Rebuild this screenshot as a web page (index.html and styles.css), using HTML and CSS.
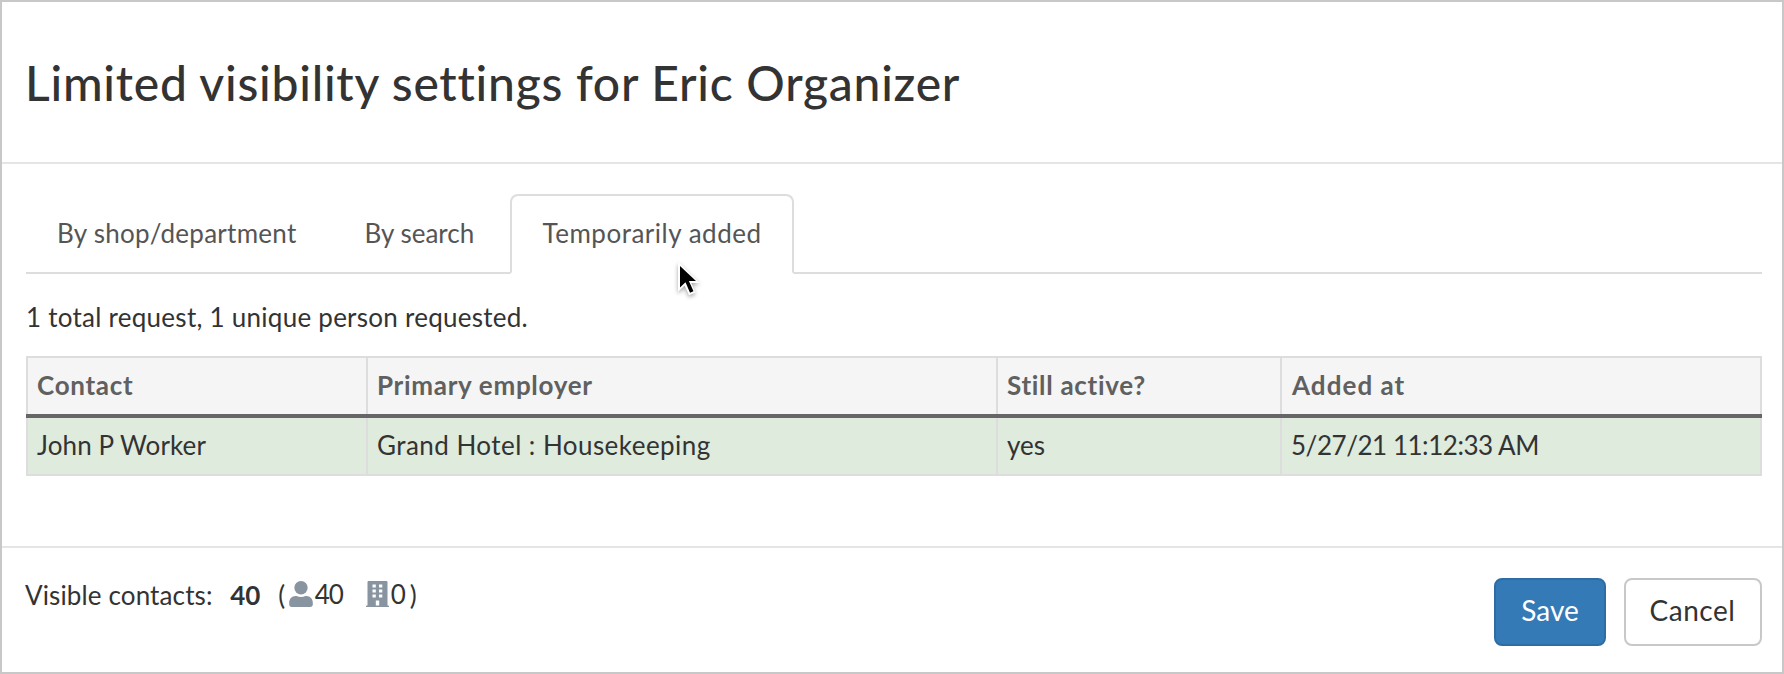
FILE: index.html
```
<!DOCTYPE html>
<html lang="en">
<head>
<meta charset="utf-8">
<title>Limited visibility settings</title>
<link rel="stylesheet" href="styles.css">
</head>
<body>
<main class="modal">
  <header class="modal-header">
    <h1 class="modal-title">Limited visibility settings for Eric Organizer</h1>
  </header>
  <section class="modal-body">
    <nav class="tabs">
      <a class="tab tab-shop">By shop/department</a>
      <a class="tab tab-search">By search</a>
      <a class="tab tab-temp active">Temporarily added</a>
    </nav>
    <p class="summary">1 total request, 1 unique person requested.</p>
    <table class="requests">
      <colgroup><col class="col-contact"><col class="col-employer"><col class="col-active"><col class="col-added"></colgroup>
      <thead>
        <tr><th>Contact</th><th>Primary employer</th><th>Still active?</th><th class="added-head">Added at</th></tr>
      </thead>
      <tbody>
        <tr><td class="name">John P Worker</td><td class="employer">Grand Hotel : Housekeeping</td><td>yes</td><td class="date">5/27/21 11:12:33 AM</td></tr>
      </tbody>
    </table>
  </section>
  <footer class="modal-footer">
    <div class="counts">
      <span class="counts-label">Visible contacts:</span>
      <strong class="total">40</strong>
      <span class="paren-open">(</span>
      <svg class="icon-person" viewBox="0 0 24 26"><circle cx="12" cy="6.7" r="6.7"/><path d="M6.600 15h1c1.300.6 2.800.9 4.400.9s3.100-.3 4.400-.9h1c3.600 0 6.400 2.900 6.400 6.500v2c0 1.400-1.100 2.500-2.500 2.500H2.700C1.300 26 .2 24.900.2 23.500v-2C.2 17.900 3 15 6.600 15z"/></svg>
      <span class="people">40</span>
      <svg class="icon-building" viewBox="0 0 23 26"><path fill-rule="evenodd" d="M1.500 1.200C1.500.5 2 0 2.700 0h17.600c.7 0 1.200.5 1.200 1.200v23.200h.6c.5 0 .9.4.9.900v.7H0v-.7c0-.5.4-.9.9-.9h.6zM6.500 3.400v3.200h3.300V3.400zM13 3.400v3.200h3.300V3.400zM6.500 8.400v3.200h3.300V8.400zM13 8.400v3.200h3.300V8.400zM6.500 13.400v3.200h3.300v-3.200zM13 13.400v3.200h3.300v-3.200zM9.800 19.600v4.800h3.400v-4.800z"/></svg>
      <span class="orgs">0</span>
      <span class="paren-close">)</span>
    </div>
    <div class="actions">
      <button class="btn btn-save">Save</button>
      <button class="btn btn-cancel">Cancel</button>
    </div>
  </footer>
</main>
<svg class="cursor" viewBox="0 0 32 42"><path d="M5 1.500v30.300l6.700-6.300 4.300 9.800 6.300-2.800-4.100-9.500h8.200z" fill="#fff"/><path d="M7 6v21.500l5.500-5.300 4.500 10.500 3.500-1.500-4.600-10.200H23z" fill="#000"/></svg>
</body>
</html>
```
FILE: styles.css
```
* { box-sizing: border-box; }
body {
  margin: 0;
  background: #fff;
  color: #333;
  font: 26px/36px Lato, "Open Sans", sans-serif;
}
.modal {
  display: flex;
  flex-direction: column;
  width: 1784px;
  height: 674px;
  border: 2px solid #c8c8c8;
}
.modal-header {
  height: 162px;
  padding-left: 23px;
  border-bottom: 2px solid #e5e5e5;
}
.modal-title {
  margin: 0;
  font-size: 48px;
  font-weight: 500;
  line-height: 161px;
  letter-spacing: .75px;
}
.modal-body {
  height: 382px;
  padding: 30px 20px 0 24px;
}
.tabs {
  display: flex;
  gap: 4px;
  height: 80px;
  border-bottom: 2px solid #ddd;
}
.tab {
  height: 80px;
  padding: 19px 0 0 28.500px;
  border: 2px solid transparent;
  color: #555;
  white-space: nowrap;
}
.tab-shop { width: 304px; padding-left: 29px; letter-spacing: .27px; }
.tab-search { width: 172px; }
.tab-temp { width: 284px; padding-left: 30.500px; letter-spacing: .51px; }
.tab.active {
  background: #fff;
  border-color: #ddd;
  border-bottom-color: #fff;
  border-radius: 8px 8px 0 0;
}
.summary { margin: 25px 0 21px; letter-spacing: .26px; }
.requests {
  width: 1736px;
  table-layout: fixed;
  border-collapse: collapse;
}
.col-contact { width: 340px; }
.col-employer { width: 630px; }
.col-active { width: 284px; }
.requests th,
.requests td {
  padding: 9px 10px 11px 9px;
  border: 2px solid #ddd;
  text-align: left;
}
.requests th {
  background: #f5f5f5;
  border-bottom: 4px solid #666;
  color: #606060;
  font-weight: 700;
  letter-spacing: .7px;
}
.requests .added-head { padding-left: 10px; letter-spacing: 1.05px; }
.requests td { background: #deebdd; }
.name { letter-spacing: .12px; }
.employer { letter-spacing: .45px; }
.date { letter-spacing: -.46px; }
.modal-footer {
  display: flex;
  justify-content: space-between;
  flex: 1;
  padding: 28px 20px 0 23px;
  border-top: 2px solid #e5e5e5;
}
.counts { display: flex; padding-top: 1px; }
.counts-label { letter-spacing: .13px; }
.total { width: 48px; margin-left: 17.500px; }
.paren-open { width: 10.500px; }
.icon-person { width: 24px; height: 26px; margin: 4px 2px 0 0; fill: #8894a0; }
.icon-building { width: 23px; height: 26px; margin: 4px 2px 0 0; fill: #8894a0; }
.people { width: 51px; letter-spacing: -1px; line-height: 34px; }
.orgs { width: 19px; line-height: 34px; }
.actions { display: flex; gap: 18px; padding-top: 2px; }
.btn {
  height: 68px;
  padding: 10px 0 14px;
  border: 2px solid #c8c8c8;
  border-radius: 8px;
  background: #fff;
  color: #333;
  font: 28px/40px Lato, "Open Sans", sans-serif;
}
.btn-save { width: 112px; border-color: #2e6da4; background: #337ab7; color: #fff; }
.btn-cancel { width: 138px; padding-right: 1px; letter-spacing: .5px; }
.cursor {
  position: absolute;
  left: 673px;
  top: 260px;
  width: 32px;
  height: 42px;
  filter: drop-shadow(0 2px 2px rgba(0, 0, 0, .35));
}
```
